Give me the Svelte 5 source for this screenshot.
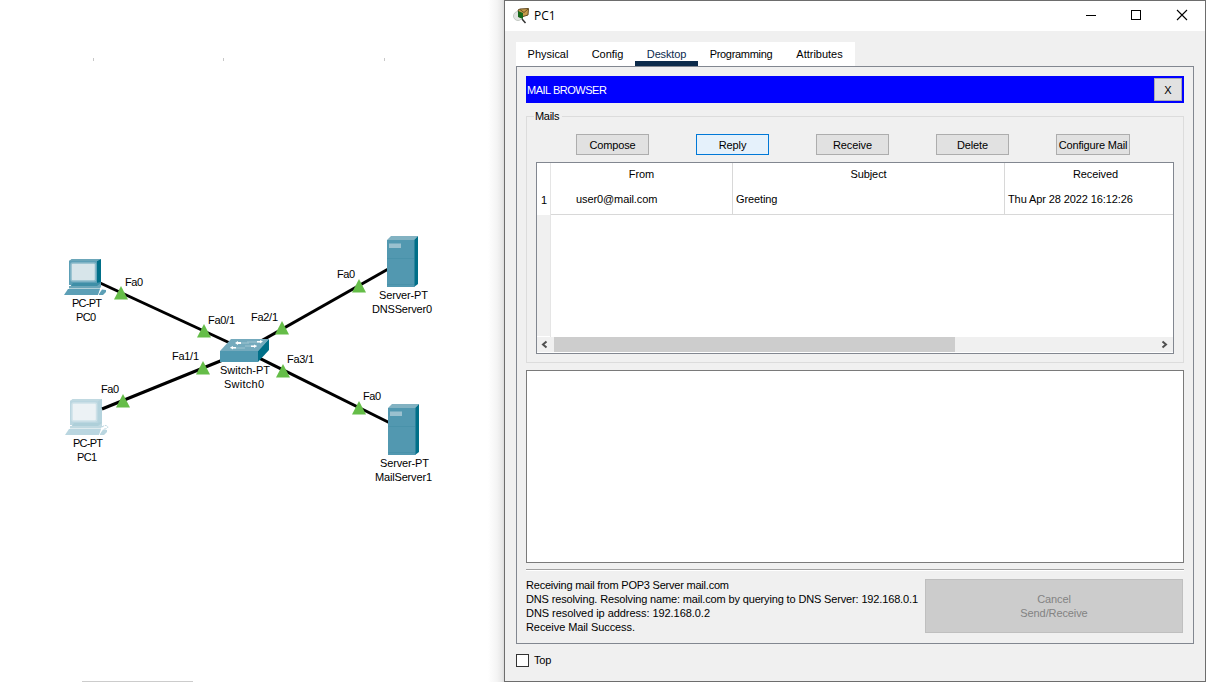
<script>
  const tabs = ['Physical', 'Config', 'Desktop', 'Programming', 'Attributes'];
  const tabWidths = [64, 55, 63, 86, 71];
  const actions = ['Compose', 'Reply', 'Receive', 'Delete', 'Configure Mail'];
  const log = [
    'Receiving mail from POP3 Server mail.com',
    'DNS resolving. Resolving name: mail.com by querying to DNS Server: 192.168.0.1',
    'DNS resolved ip address: 192.168.0.2',
    'Receive Mail Success.'
  ];
  const logWidths = [203, 392, 184, 109];
  const links = [
    [98, 282, 245, 350],
    [102, 409, 245, 351],
    [390, 268, 245, 350],
    [390, 423, 245, 351]
  ];
  const ports = [
    [121, 293], [204, 331], [282, 328], [359, 286],
    [123, 401], [203, 368], [283, 371], [359, 408]
  ];
  const labels = [
    ['Fa0', 125, 286, 18], ['Fa0/1', 208, 324, 27], ['Fa2/1', 251, 321, 27], ['Fa0', 337, 278, 18],
    ['Fa0', 101, 393, 18], ['Fa1/1', 172, 360, 27], ['Fa3/1', 287, 363, 27], ['Fa0', 363, 400, 18],
    ['PC-PT', 72, 307, 30], ['PC0', 76, 321, 20],
    ['PC-PT', 73, 447, 30], ['PC1', 77, 461, 20],
    ['Server-PT', 379, 299, 49], ['DNSServer0', 372, 313, 60],
    ['Server-PT', 380, 467, 49], ['MailServer1', 375, 481, 57],
    ['Switch-PT', 220, 374, 50], ['Switch0', 224, 388, 40]
  ];
  let onTop = $state(false);
</script>

{#snippet pc(x, y, faded)}
  <g transform="translate({x} {y})" opacity={faded ? 0.42 : 1}>
    <path d="M5 2 8 0H37V23L33 26H5Z" fill="#5c9fb6" />
    <path d="M33 2 37 0V23L33 26Z" fill={faded ? '#4f98b0' : '#006f88'} />
    <path d="M5 2 8 0H37L33 2Z" fill="#6ba6b9" />
    <rect x="7" y="4" width="24.500" height="18" rx="1.500" fill={faded ? '#d4e1e8' : '#d7e5ea'} stroke="#8bbaca" stroke-width="1.500" />
    <path d="M9 24H32L37 23V26L32 29H5Z" fill="#3f8fa7" />
    <path d="M5 27H33L37 24V28L33 32H5Z" fill="#6ba6b9" />
    <path d="M4 30H36L34 36H0Z" fill="#5c9fb6" />
    <path d="M5 29.500H35" stroke="#b4d1da" />
    <path d="M35 35 38 30.500 42 31V33L39 36H35Z" fill="#5c9fb6" />
    {#if faded}<path d="M37 28q4-3 6 0-1 2-4 2" fill="none" stroke="#4f98b0" stroke-dasharray="2 1" />{/if}
  </g>
{/snippet}

{#snippet server(x, y)}
  <g transform="translate({x} {y})">
    <path d="M0 4 4 0H31L27 4Z" fill="#82b2c2" />
    <path d="M27 4 31 0V48L27 51Z" fill="#006f88" />
    <rect y="4" width="27.500" height="47" fill="#5298b0" />
    <rect x="2" y="7.500" width="12" height="4.500" fill="#9bc1cf" />
    <path d="M0 22.500H27M0 48.500H27" stroke="#408ca5" stroke-width=".5" />
  </g>
{/snippet}

<main>
  <section class="workspace">
    <svg width="504" height="682">
      <path d="M93.500 58v3M223.500 58v3M384.500 58v3" stroke="#c8c8c8" />
      <path d="M82 681.500H193" stroke="#ccc" />
      {#each links as [x1, y1, x2, y2]}
        <line {x1} {y1} {x2} {y2} stroke="#000" stroke-width="3" />
      {/each}
      {#each ports as [x, y]}
        <path d="M{x} {y - 7}L{x + 7} {y + 6.500}H{x - 7}Z" fill="#65bd48" />
      {/each}
      {@render pc(64, 259, false)}
      {@render pc(65, 399, true)}
      {@render server(387, 236)}
      {@render server(388, 404)}
      <g transform="translate(220 339)">
        <path d="M0 12 11 0H49L38 12Z" fill="#74aabd" />
        <path d="M38 12 49 0V11L38 23Z" fill="#006f88" />
        <rect y="12" width="38" height="11" fill="#4f98b0" />
        <path d="M16 4H29M27 3H41M10 9H25M25 7H37" stroke="#9fc5d1" />
        <path d="M15 4 18 2V3H21V5H18V6ZM43 2.500 40 1V2H37V3.500H40V4.500ZM10 8.500 13 7V8H16V9.500H13V10.500ZM37 7 34 5.500V6.500H31V8H34V9Z" fill="#fff" />
      </g>
      {#each labels as [text, x, y, w]}
        <text {x} {y} textLength={w}>{text}</text>
      {/each}
    </svg>
  </section>

  <section class="window">
    <header>
      <svg class="logo" width="17" height="17" viewBox="0 0 17 17">
        <circle cx="5" cy="8" r="4.500" fill="#e2e4e2" stroke="#c3c8c3" />
        <path d="M5 2 7 1 15.500 .500 15 7 7 9.500Z" fill="#c69c4c" stroke="#604a23" />
        <path d="M7 1.500 11 4.500 15 1" fill="none" stroke="#6d5221" />
        <path d="M5 3 10 5V11L5 9Z" fill="#16691b" />
        <path d="M9 11 12.500 15" stroke="#333" stroke-width="1.500" />
      </svg>
      <h1>PC1</h1>
      <svg class="controls" width="105" height="14" viewBox="0 0 105 14" fill="none" stroke="#000">
        <path d="M2 6.500H12" />
        <rect x="47.500" y="1.500" width="9" height="9" />
        <path d="M93 1 103 11M103 1 93 11" stroke-width="1.100" />
      </svg>
    </header>
    <nav>
      {#each tabs as tab, i}
        <span class:active={tab === 'Desktop'} style:width="{tabWidths[i]}px">{tab}</span>
      {/each}
    </nav>
    <div class="panel">
      <div class="bar"><span>MAIL BROWSER</span><button>X</button></div>
      <div class="group">
        <span class="legend">Mails</span>
        <div class="actions">
          {#each actions as a}
            <button class:focus={a === 'Reply'}>{a}</button>
          {/each}
        </div>
        <div class="table">
          <div class="rows">
            <div class="index"><span>1</span></div>
            <div class="col from"><b>From</b><span>user0@mail.com</span></div>
            <div class="col subject"><b>Subject</b><span>Greeting</span></div>
            <div class="col received"><b>Received</b><span>Thu Apr 28 2022 16:12:26</span></div>
          </div>
          <div class="scroll">
            <svg width="17" height="15"><path d="M9.500 4.500 6 7.500 9.500 10.500" /></svg>
            <i></i>
            <svg width="17" height="15"><path d="M6.500 4.500 10 7.500 6.500 10.500" /></svg>
          </div>
        </div>
      </div>
      <div class="body"></div>
      <div class="rule"></div>
      <div class="status">
        <svg width="396" height="60">
          {#each log as line, i}
            <text x="0" y={10 + i * 14} textLength={logWidths[i]}>{line}</text>
          {/each}
        </svg>
        <button disabled>Cancel<br />Send/Receive</button>
      </div>
    </div>
    <label><input type="checkbox" bind:checked={onTop} />Top</label>
  </section>
</main>

<style>
  :global(body) { margin: 0; }
  main {
    display: flex; width: 1206px; height: 682px; overflow: hidden;
    background: #fff; color: #000; font: 11px/14px "Liberation Sans", Arial, sans-serif;
  }
  * { box-sizing: border-box; }
  svg { display: block; flex: none; }
  .workspace { width: 504px; background: linear-gradient(90deg, #fff 488px, #f4f4f4 497px, #e8e8e8 502px, #dcdcdc); }
  button {
    font: inherit; color: #000; padding: 0; margin: 0; border: 1px solid #adadad;
    background: #e1e1e1; border-radius: 0; white-space: nowrap;
  }
  .window { width: 702px; height: 682px; border: 1px solid #6d6d6d; background: #f0f0f0; }
  header { height: 30px; background: #fff; display: flex; align-items: center; padding: 0 16px 0 8px; }
  h1 { font: 12px/16px "Open Sans", "Noto Sans", sans-serif; margin: 0 auto 0 4px; }
  nav { display: flex; width: 339px; height: 24px; margin: 11px 0 0 11px; background: #fff; }
  nav span { text-align: center; padding-top: 5px; letter-spacing: -.02px; }
  nav span:nth-child(4) { letter-spacing: -.3px; }
  nav .active { color: #0b2a4f; border-bottom: 5px solid #0b2a4a; letter-spacing: -.15px; }
  .panel { width: 678px; height: 578px; margin-left: 11px; border: 1px solid #828790; padding: 9px; }
  .bar { height: 27px; background: #00f; color: #fff; display: flex; align-items: center; justify-content: space-between; padding: 0 2px 0 1px; }
  .bar span { letter-spacing: -.48px; }
  .bar button { width: 28px; height: 23px; }
  .group { height: 247px; margin-top: 13px; border: 1px solid #dcdcdc; padding: 0 9px; }
  .legend { display: block; width: 28px; height: 14px; margin: -8px 0 0 -2px; padding-left: 1px; background: #f0f0f0; letter-spacing: -.3px; }
  .actions { display: flex; gap: 47px; margin: 11px 0 0 40px; }
  .actions button { width: 73px; height: 21px; letter-spacing: -.12px; }
  .actions button:last-child { width: 74px; letter-spacing: -.18px; }
  .actions .focus { border-color: #0078d7; background: #e5f1fb; }
  .table { width: 638px; height: 192px; margin-top: 7px; border: 1px solid #828790; background: #fff; }
  .rows { display: flex; height: 174px; }
  .index { width: 14px; background: linear-gradient(#fff 52px, #f0f0f0 52px 173px, #fff 173px); border-right: 1px solid #e5e5e5; padding: 30px 0 0 4px; }
  .col { height: 52px; border-right: 1px solid #d8d8d8; border-bottom: 1px solid #d8d8d8; display: flex; flex-direction: column; padding: 4px 3px 0; gap: 11px; letter-spacing: -.1px; }
  .col b { font-weight: normal; text-align: center; }
  .from { width: 182px; }
  .from span { padding-left: 22px; }
  .subject { width: 272px; }
  .received { width: 168px; border-right: 0; white-space: nowrap; }
  .received b { padding-left: 13px; }
  .scroll { height: 15px; display: flex; background: #f0f0f0; }
  .scroll i { width: 401px; margin-right: auto; background: #cdcdcd; }
  .scroll path { fill: none; stroke: #505050; stroke-width: 2; }
  .body { height: 193px; margin-top: 7px; border: 1px solid #7a7a7a; background: #fff; }
  .rule { height: 2px; margin-top: 6px; background: #a0a0a0; border-bottom: 1px solid #fff; }
  .status { display: flex; margin-top: 8px; }
  .status svg { width: 399px; }
  .status button { width: 258px; height: 54px; background: #ccc; border-color: #bfbfbf; color: #838383; letter-spacing: -.1px; }
  label { display: flex; align-items: center; gap: 5px; margin: 9px 0 0 11px; letter-spacing: -.2px; }
  input { appearance: none; width: 13px; height: 13px; margin: 0; border: 1px solid #333; background: #fff; }
  input:checked { background: #333; }
</style>
